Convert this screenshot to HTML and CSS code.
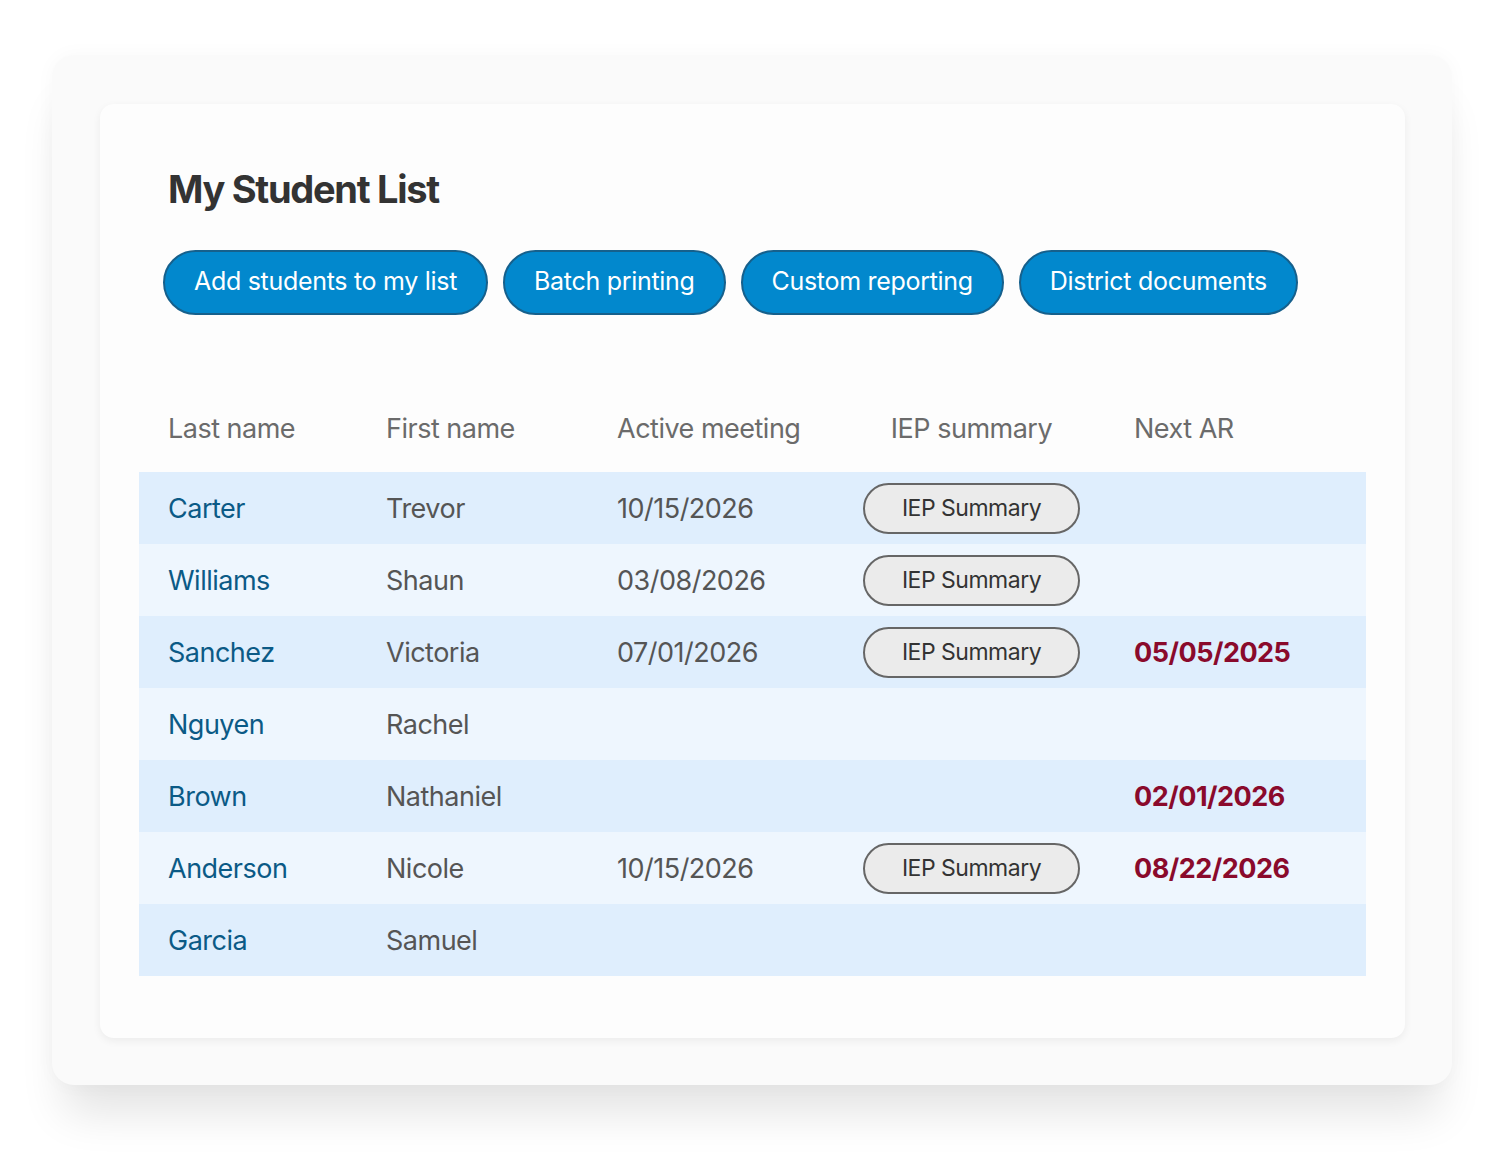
FILE: index.html
```html
<!DOCTYPE html>
<html lang="en">
<head>
    <meta charset="UTF-8">
    <meta name="viewport" content="width=device-width, initial-scale=1.0">
    <title>My Student List</title>
    <link rel="stylesheet" href="styles.css">
</head>
<body>
<div class="frame">
    <div class="card">
        <h1 class="title">My Student List</h1>
        <div class="actions">
            <button class="action-btn">Add students to my list</button>
            <button class="action-btn">Batch printing</button>
            <button class="action-btn">Custom reporting</button>
            <button class="action-btn">District documents</button>
        </div>

        <div class="student-table">
            <div class="row head">
                <div class="cell">Last name</div>
                <div class="cell">First name</div>
                <div class="cell">Active meeting</div>
                <div class="cell iep-head">IEP summary</div>
                <div class="cell">Next AR</div>
            </div>
            <div class="row">
                <div class="cell last">Carter</div>
                <div class="cell">Trevor</div>
                <div class="cell">10/15/2026</div>
                <div class="cell"><button class="pill">IEP Summary</button></div>
                <div class="cell"></div>
            </div>
            <div class="row">
                <div class="cell last">Williams</div>
                <div class="cell">Shaun</div>
                <div class="cell">03/08/2026</div>
                <div class="cell"><button class="pill">IEP Summary</button></div>
                <div class="cell"></div>
            </div>
            <div class="row">
                <div class="cell last">Sanchez</div>
                <div class="cell">Victoria</div>
                <div class="cell">07/01/2026</div>
                <div class="cell"><button class="pill">IEP Summary</button></div>
                <div class="cell due">05/05/2025</div>
            </div>
            <div class="row">
                <div class="cell last">Nguyen</div>
                <div class="cell">Rachel</div>
                <div class="cell"></div>
                <div class="cell"></div>
                <div class="cell"></div>
            </div>
            <div class="row">
                <div class="cell last">Brown</div>
                <div class="cell">Nathaniel</div>
                <div class="cell"></div>
                <div class="cell"></div>
                <div class="cell due">02/01/2026</div>
            </div>
            <div class="row">
                <div class="cell last">Anderson</div>
                <div class="cell">Nicole</div>
                <div class="cell">10/15/2026</div>
                <div class="cell"><button class="pill">IEP Summary</button></div>
                <div class="cell due">08/22/2026</div>
            </div>
            <div class="row">
                <div class="cell last">Garcia</div>
                <div class="cell">Samuel</div>
                <div class="cell"></div>
                <div class="cell"></div>
                <div class="cell"></div>
            </div>
        </div>
    </div>
</div>
</body>
</html>
```

FILE: styles.css
```css
body {
    margin: 0;
    padding: 55px 0 83px 52px;
    background: #ffffff;
    font-family: Inter, "Noto Sans", sans-serif;
    color: #555555;
}
.frame {
    width: 1400px;
    height: 1030px;
    box-sizing: border-box;
    padding: 49px 47px 49px 48px;
    background: #fafafa;
    border-radius: 22px;
    box-shadow: 0 40px 45px -12px rgba(0, 0, 0, 0.11), 0 0 20px rgba(0, 0, 0, 0.03);
}
.card {
    height: 934px;
    box-sizing: border-box;
    padding: 60px 39px 0 39px;
    background: #fdfdfd;
    border-radius: 14px;
    box-shadow: 0 3px 8px rgba(0, 0, 0, 0.06);
}
.title {
    margin: 0 0 36px 29px;
    font-size: 38px;
    font-weight: 700;
    letter-spacing: -1.3px;
    color: #333333;
    line-height: 50px;
}
.actions {
    display: flex;
    gap: 15px;
    margin-left: 24px;
}
.action-btn {
    height: 65px;
    padding: 0 29px 3px;
    border: 2px solid #16608c;
    border-radius: 33px;
    background: #0288cd;
    color: #ffffff;
    font-family: inherit;
    font-size: 25px;
    letter-spacing: -0.3px;
}
.student-table {
    margin-top: 71px;
}
.row {
    display: grid;
    grid-template-columns: 218px 231px 246px 271px 260px;
    height: 72px;
    align-items: center;
    font-size: 27px;
    letter-spacing: -0.5px;
}
.row:nth-child(even) {
    background: #dfeefd;
}
.row:nth-child(odd) {
    background: #eef6fe;
}
.row.head {
    background: transparent;
    height: 86px;
    align-items: start;
    padding-top: 26px;
    box-sizing: border-box;
    color: #6b6b6b;
}
.cell {
    padding-left: 29px;
    color: inherit;
}
.iep-head {
    width: 217px;
    text-align: center;
}
.last {
    color: #0b5a86;
}
.due {
    color: #8a0a2c;
    font-weight: 700;
}
.pill {
    width: 217px;
    height: 51px;
    border: 2px solid #666666;
    border-radius: 26px;
    background: #ebebeb;
    color: #333333;
    font-family: inherit;
    font-size: 23px;
    letter-spacing: -0.5px;
}
```
